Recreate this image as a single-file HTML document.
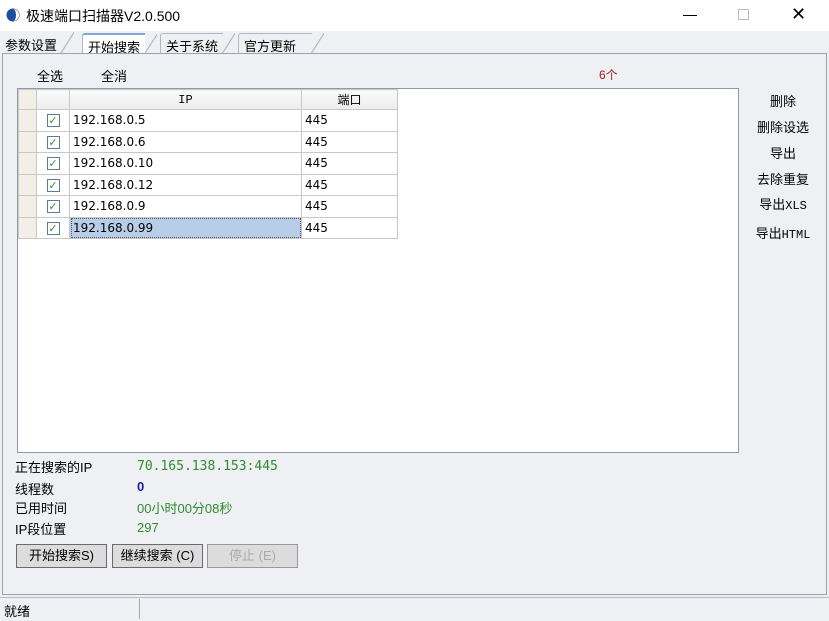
<!DOCTYPE html>
<html><head><meta charset="utf-8"><style>
*{margin:0;padding:0;box-sizing:border-box}
body{width:829px;height:621px;background:#eef0f3;font-family:"Liberation Sans","Noto Sans CJK SC",sans-serif;font-size:13px;color:#000;position:relative;overflow:hidden}
.a{position:absolute;white-space:nowrap}
.title{left:0;top:0;width:829px;height:31px;background:#fff}
.tabs{top:31px;left:0;width:829px;height:22px;background:#eef0f3}
.tab{position:absolute;top:33px;height:21px;border:1px solid #b0b8c4;border-bottom:none;border-right:none;background:#eef0f3;padding:2px 5px 0;font-size:13px;border-radius:3px 0 0 0}
.tab:after{content:"";position:absolute;right:-12px;top:-1px;width:14px;height:22px;background:linear-gradient(to bottom right,transparent 48%,#b0b8c4 49%,#b0b8c4 53%,transparent 54%)}
.panel{left:2px;top:53px;width:825px;height:542px;border:1px solid #9aa4b0;background:#eef0f3}
.grid{left:17px;top:88px;width:722px;height:365px;background:#fff;border:1px solid #8e9aa8}
table{border-collapse:collapse;position:absolute;left:0;top:0}
td{height:21.5px;border:1px solid #c8c8c8;font-size:12px;padding:0 3px;font-family:"DejaVu Sans","Noto Sans CJK SC",sans-serif}
.hd td{background:linear-gradient(#fbfbfb,#ececec);text-align:center;height:20px;font-family:"Liberation Mono","Noto Sans CJK SC",monospace}
.rh{width:18px;background:#f1efe6 !important}
.ck{width:33px;text-align:center}
.cb{display:inline-block;width:13px;height:13px;border:1px solid #5e7a95;background:#fff;color:#2a9a2a;font-size:11px;line-height:11px;font-weight:bold}
.side{font-size:13px;text-align:center;width:70px;left:748px}
.m{font-family:"Liberation Mono",monospace;font-size:12px}
.btn{position:absolute;top:544px;height:24px;border:1px solid #6a6a6a;background:#dcdcdc;font-size:13px;text-align:center;line-height:22px}
.green{color:#2e8b2e;font-family:"DejaVu Sans Mono","Noto Sans CJK SC",monospace;font-size:13px}
</style></head><body>
<div class="a title"></div>
<svg class="a" style="left:6px;top:8px" width="14" height="14"><circle cx="7" cy="7" r="6.5" fill="#1b4fa0"/><path d="M7 1a6 6 0 0 1 0 12a3 6 0 0 0 0-12z" fill="#fff"/></svg>
<div class="a" style="left:26px;top:6px;font-size:14px">极速端口扫描器V2.0.500</div>
<div class="a" style="left:683px;top:15px;width:14px;height:1px;background:#000"></div>
<div class="a" style="left:738px;top:9px;width:11px;height:11px;border:1px solid #bbb"></div>
<div class="a" style="left:791px;top:4px;font-size:18px">✕</div>
<div class="a tabs"></div>
<div class="tab" style="left:0;border:none">参数设置</div>
<div class="tab" style="left:82px;background:#fff;border-top:2px solid #7fa8d8">开始搜索</div>
<div class="tab" style="left:160px">关于系统</div>
<div class="tab" style="left:238px;padding-right:16px">官方更新</div>
<div class="a panel"></div>
<div class="a" style="left:37px;top:66px">全选</div>
<div class="a" style="left:101px;top:66px">全消</div>
<div class="a" style="left:599px;top:66px;color:#a02020;font-size:12px">6个</div>
<div class="a grid">
<table>
<tr class="hd"><td class="rh"></td><td class="ck"></td><td style="width:232px">IP</td><td style="width:96px">端口</td></tr>
<tr><td class="rh"></td><td class="ck"><span class="cb">✓</span></td><td>192.168.0.5</td><td>445</td></tr>
<tr><td class="rh"></td><td class="ck"><span class="cb">✓</span></td><td>192.168.0.6</td><td>445</td></tr>
<tr><td class="rh"></td><td class="ck"><span class="cb">✓</span></td><td>192.168.0.10</td><td>445</td></tr>
<tr><td class="rh"></td><td class="ck"><span class="cb">✓</span></td><td>192.168.0.12</td><td>445</td></tr>
<tr><td class="rh"></td><td class="ck"><span class="cb">✓</span></td><td>192.168.0.9</td><td>445</td></tr>
<tr><td class="rh"></td><td class="ck"><span class="cb">✓</span></td><td style="background:#b8cde8;outline:1px dotted #555;outline-offset:-2px">192.168.0.99</td><td>445</td></tr>
</table></div>
<div class="a side" style="top:91px">删除</div>
<div class="a side" style="top:117px">删除设选</div>
<div class="a side" style="top:143px">导出</div>
<div class="a side" style="top:169px">去除重复</div>
<div class="a side" style="top:194px">导出<span class="m">XLS</span></div>
<div class="a side" style="top:223px">导出<span class="m">HTML</span></div>
<div class="a" style="left:15px;top:457px">正在搜索的IP</div>
<div class="a green" style="left:137px;top:459px">70.165.138.153:445</div>
<div class="a" style="left:15px;top:479px">线程数</div>
<div class="a" style="left:137px;top:479px;color:#1a1aa0;font-weight:bold">0</div>
<div class="a" style="left:15px;top:498px">已用时间</div>
<div class="a" style="left:137px;top:498px;color:#2e8b2e">00小时00分08秒</div>
<div class="a" style="left:15px;top:519px">IP段位置</div>
<div class="a" style="left:137px;top:520px;color:#2e8b2e">297</div>
<div class="btn" style="left:16px;width:91px">开始搜索S)</div>
<div class="btn" style="left:112px;width:91px">继续搜索 (C)</div>
<div class="btn" style="left:207px;width:91px;color:#aaa;border-color:#999">停止 (E)</div>
<div class="a" style="left:0;top:597px;width:829px;height:24px;border-top:1px solid #bbb;background:#eef0f3"></div>
<div class="a" style="left:139px;top:599px;width:690px;height:20px;border-left:1px solid #aaa"></div>
<div class="a" style="left:4px;top:601px">就绪</div>
</body></html>
